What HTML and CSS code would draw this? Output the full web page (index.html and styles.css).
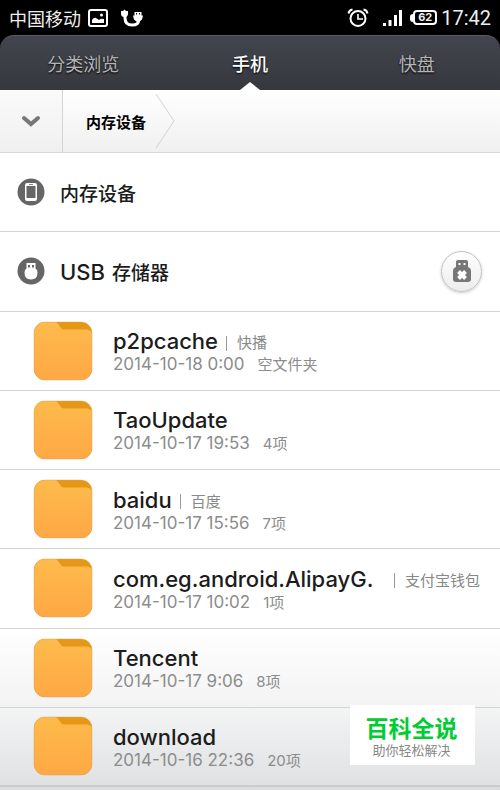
FILE: index.html
```html
<!DOCTYPE html>
<html lang="zh-CN">
<head>
<meta charset="utf-8">
<meta name="viewport" content="width=device-width, initial-scale=1">
<title>文件管理</title>
<link rel="stylesheet" href="styles.css">
</head>
<body>
<svg class="defs" aria-hidden="true">
  <defs>
    <linearGradient id="folder-fill" x1="0" y1="0" x2="0" y2="1">
      <stop offset="0" stop-color="#fdbb4b"/>
      <stop offset="1" stop-color="#ffa845"/>
    </linearGradient>
    <symbol id="folder" viewBox="0 0 60 60">
      <rect x="1" y="1" width="58" height="58" rx="11" fill="#e79717"/>
      <path d="M12 1h10q2 0 3 2l3 4q1 1.500 3 1.500h22q4 0 6 3V48a11 11 0 0 1-11 11H12A11 11 0 0 1 1 48V12A11 11 0 0 1 12 1z" fill="url(#folder-fill)"/>
      <rect x="1" y="1" width="58" height="58" rx="11" fill="none" stroke="#d9a050" stroke-opacity=".4"/>
    </symbol>
  </defs>
</svg>

<header class="top">
<div class="status">
  <span>中国移动</span>
  <svg class="picture-icon" width="20" height="18" viewBox="0 0 20 18"><rect x="1" y="1" width="18" height="16" rx="2" fill="none" stroke="#fff" stroke-width="2"/><path d="M4 14v-3q2-3 4-2l3 2q2-2 5-1v4z" fill="#fff"/><circle cx="13.500" cy="6" r="1.500" fill="#fff"/></svg>
  <svg class="usb-icon" width="22" height="18" viewBox="0 0 22 18"><path d="M4 6v3q0 7 7 7t6.500-5" fill="none" stroke="#fff" stroke-width="3"/><path d="M0 2h2l1.500-1.500L5 2h2v2.500q0 3.500-3.500 3.500T0 4.500zM13.500 3h7v3.500h1.500l-1 4-3 2.500h-2l-3-2.500-1-4h1.500z" fill="#fff"/><path d="M15.500 4v1.500M18.500 4v1.500" stroke="#000"/></svg>
  <span class="spacer"></span>
  <svg class="alarm-icon" width="22" height="20" viewBox="0 0 22 20"><circle cx="11" cy="10.500" r="7.500" fill="none" stroke="#fff" stroke-width="2"/><path d="M11 6v5h5" fill="none" stroke="#fff" stroke-width="1.600"/><path d="M1.500 5.500Q2 2 5.500 1.500M16.500 1.500Q20 2 20.500 5.500" fill="none" stroke="#fff" stroke-width="2"/></svg>
  <svg class="signal-icon" width="19" height="18" viewBox="0 0 19 18"><path d="M0 14h3v3H0zM5.500 11h3v6h-3zM11 6h3v11h-3zM16 1h3v16h-3z" fill="#fff"/></svg>
  <span class="battery"><span class="battery-level">62</span></span>
  <span class="clock">17:42</span>
</div>

<nav class="tabs">
  <a class="tab" href="#categories">分类浏览</a>
  <a class="tab active" href="#phone" aria-current="page">手机</a>
  <a class="tab" href="#cloud">快盘</a>
</nav>
</header>

<div class="path">
  <button class="path-toggle" aria-label="展开路径"><svg width="20" height="14" viewBox="0 0 20 14"><path d="M3 4l7 6 7-6" fill="none" stroke="#777" stroke-width="4" stroke-linecap="round"/></svg></button>
  <a class="crumb" href="#root">内存设备</a>
  <svg class="crumb-end" width="20" height="56" viewBox="0 0 20 56"><path d="M1 1l18 27L1 55" fill="none" stroke="#d3d3d3"/></svg>
</div>

<main class="list">
  <section class="row storage">
    <svg width="28" height="28" viewBox="0 0 28 28"><circle cx="14" cy="14" r="13.500" fill="#666"/><rect x="8" y="5" width="12" height="18" rx="2" fill="#fff"/><rect x="9.500" y="8" width="9" height="12" fill="#666"/><path d="M12 6.500h4" stroke="#888"/></svg>
    <h2 class="storage-name">内存设备</h2>
  </section>
  <section class="row storage">
    <svg width="28" height="28" viewBox="0 0 28 28"><circle cx="14" cy="14" r="13.500" fill="#666"/><path d="M9.500 6h9v5.500q2 1 2 4 0 7-6.500 7t-6.500-7q0-3 2-4z" fill="#fff"/><path d="M11 8h2v2.500h-2zM15 8h2v2.500h-2z" fill="#666"/></svg>
    <h2 class="storage-name"><span class="latin">USB</span> 存储器</h2>
    <button class="eject" aria-label="卸载 USB 存储器"><svg width="20" height="22" viewBox="0 0 20 22"><path d="M6 0h8q2 0 2 2v5q3 1 3 4v8q0 3-3 3H4q-3 0-3-3v-8q0-3 3-4V2q0-2 2-2z" fill="#777"/><path d="M6.500 3h2v2h-2zM11.500 3h2v2h-2z" fill="#fff"/><path d="M6.500 11.500l7 7m0-7l-7 7" stroke="#fff" stroke-width="4"/></svg></button>
  </section>
  <a class="row folder" href="#p2pcache"><svg class="folder-icon"><use href="#folder"/></svg>
    <span class="info"><span class="title"><span class="name">p2pcache</span><span class="label">快播</span></span><span class="meta"><span>2014-10-18 0:00</span><span class="count">空文件夹</span></span></span></a>
  <a class="row folder" href="#taoupdate"><svg class="folder-icon"><use href="#folder"/></svg>
    <span class="info"><span class="title"><span class="name">TaoUpdate</span></span><span class="meta"><span>2014-10-17 19:53</span><span class="count">4项</span></span></span></a>
  <a class="row folder" href="#baidu"><svg class="folder-icon"><use href="#folder"/></svg>
    <span class="info"><span class="title"><span class="name">baidu</span><span class="label">百度</span></span><span class="meta"><span>2014-10-17 15:56</span><span class="count">7项</span></span></span></a>
  <a class="row folder" href="#alipay"><svg class="folder-icon"><use href="#folder"/></svg>
    <span class="info"><span class="title"><span class="name clipped">com.eg.android.AlipayG.</span><span class="label">支付宝钱包</span></span><span class="meta"><span>2014-10-17 10:02</span><span class="count">1项</span></span></span></a>
  <a class="row folder shade-light" href="#tencent"><svg class="folder-icon"><use href="#folder"/></svg>
    <span class="info"><span class="title"><span class="name">Tencent</span></span><span class="meta"><span>2014-10-17 9:06</span><span class="count">8项</span></span></span></a>
  <a class="row folder shade-dark" href="#download"><svg class="folder-icon"><use href="#folder"/></svg>
    <span class="info"><span class="title"><span class="name">download</span></span><span class="meta"><span>2014-10-16 22:36</span><span class="count">20项</span></span></span></a>
</main>

<aside class="badge">
  <strong class="badge-name">百科全说</strong>
  <span class="badge-text">助你轻松解决</span>
</aside>
</body>
</html>
```
FILE: styles.css
```css
* { box-sizing: border-box; }

body {
  margin: 0;
  min-height: 100vh;
  display: flex;
  flex-direction: column;
  background: #fff;
  color: #1c1c1c;
  font-family: Inter, "Noto Sans CJK SC", sans-serif;
}

a { color: inherit; text-decoration: none; }
button { border: 0; padding: 0; font: inherit; }
svg { flex: none; display: block; }
.defs { position: absolute; width: 0; height: 0; }

.top { background: #000; }
.status {
  display: flex;
  align-items: center;
  height: 35px;
  padding: 0 9px;
  color: #eee;
  font-size: 18px;
}
.picture-icon { margin-left: 7px; }
.usb-icon { margin-left: 13px; }
.spacer { flex: 1; }
.signal-icon { margin: 0 8px 0 14px; }
.battery {
  display: flex;
  align-items: center;
}
.battery::before {
  content: "";
  width: 3px;
  height: 8px;
  border-radius: 3px 0 0 3px;
  background: #fff;
}
.battery-level {
  width: 24px;
  height: 15px;
  border: 2px solid #fff;
  border-radius: 4px;
  font-size: 11px;
  font-weight: 700;
  line-height: 11px;
  text-align: center;
}
.clock {
  margin-left: 4px;
  font-family: Roboto, sans-serif;
  font-size: 20px;
}

.tabs {
  display: grid;
  grid-template-columns: repeat(3, 1fr);
  height: 55px;
  border-top: 1px solid #5a5c62;
  border-radius: 14px 14px 0 0;
  background: linear-gradient(#42454d, #36383e);
  color: #b4b5b8;
  font-size: 18px;
}
.tab {
  position: relative;
  display: flex;
  align-items: center;
  justify-content: center;
  text-shadow: 0 1px 2px #000;
}
.tab.active { color: #fff; font-weight: 500; }
.tab.active::after {
  content: "";
  position: absolute;
  bottom: 0;
  border: 10px solid transparent;
  border-top: 0;
  border-bottom: 8px solid #fff;
}

.path {
  display: flex;
  align-items: center;
  height: 63px;
  border-bottom: 1px solid #d6d6d6;
  background: linear-gradient(#fff, #f0f0f0);
}
.path-toggle {
  display: flex;
  align-items: center;
  justify-content: center;
  width: 63px;
  height: 100%;
  border-right: 1px solid #d3d3d3;
  background: linear-gradient(#fafafa, #f0f0f0);
}
.crumb {
  margin: 0 9px 0 23px;
  color: #000;
  font-size: 15px;
  font-weight: 700;
}

.list {
  flex: 1;
  display: grid;
  grid-auto-rows: minmax(79px, 1fr);
  padding-bottom: 3px;
  background: #dcddde;
}
.row {
  display: flex;
  align-items: center;
  min-width: 0;
  border-bottom: 1px solid #d3d3d3;
  background: #fff;
}
.storage { padding: 0 18px 0 17px; }
.storage-name {
  flex: 1;
  margin: 0 0 0 15px;
  font-size: 19px;
  font-weight: 500;
}
.latin { margin-right: 2px; font-size: 22px; }
.eject {
  display: flex;
  align-items: center;
  justify-content: center;
  width: 41px;
  height: 41px;
  border: 1px solid #c2c2c2;
  border-radius: 50%;
  background: linear-gradient(#fff, #ececec);
  box-shadow: 0 1px 3px #0003;
}

.folder { padding: 0 20px 0 33px; }
.folder-icon { width: 60px; height: 60px; }
.info {
  flex: 1;
  min-width: 0;
  margin-left: 20px;
  padding-top: 2px;
}
.title {
  display: flex;
  align-items: flex-end;
  line-height: 26px;
  white-space: nowrap;
}
.name { font-size: 22px; font-weight: 500; }
.clipped { flex: 1; }
.label {
  display: flex;
  align-items: center;
  gap: 10px;
  margin-left: 8px;
  color: #888;
  font-size: 15px;
  line-height: 22px;
}
.label::before {
  content: "";
  width: 1px;
  height: 15px;
  background: #999;
}
.meta {
  display: flex;
  align-items: baseline;
  gap: 13px;
  color: #8c8c8c;
  font-size: 17px;
  line-height: 20px;
  white-space: nowrap;
}
.count { font-size: 15px; }
.shade-light { background: linear-gradient(#fff, #f3f3f3); }
.shade-dark {
  border-bottom: 2px solid #cbccce;
  background: linear-gradient(#f3f4f4, #e0e1e3);
}

.badge {
  position: fixed;
  right: 25px;
  bottom: 25px;
  display: flex;
  flex-direction: column;
  align-items: center;
  justify-content: center;
  width: 125px;
  height: 60px;
  padding: 6px 2px 0 0;
  background: #fff;
}
.badge-name {
  color: #0c3;
  font-size: 23px;
  font-weight: 700;
  line-height: 24px;
}
.badge-text {
  color: #888;
  font-size: 13px;
  line-height: 18px;
}
```
